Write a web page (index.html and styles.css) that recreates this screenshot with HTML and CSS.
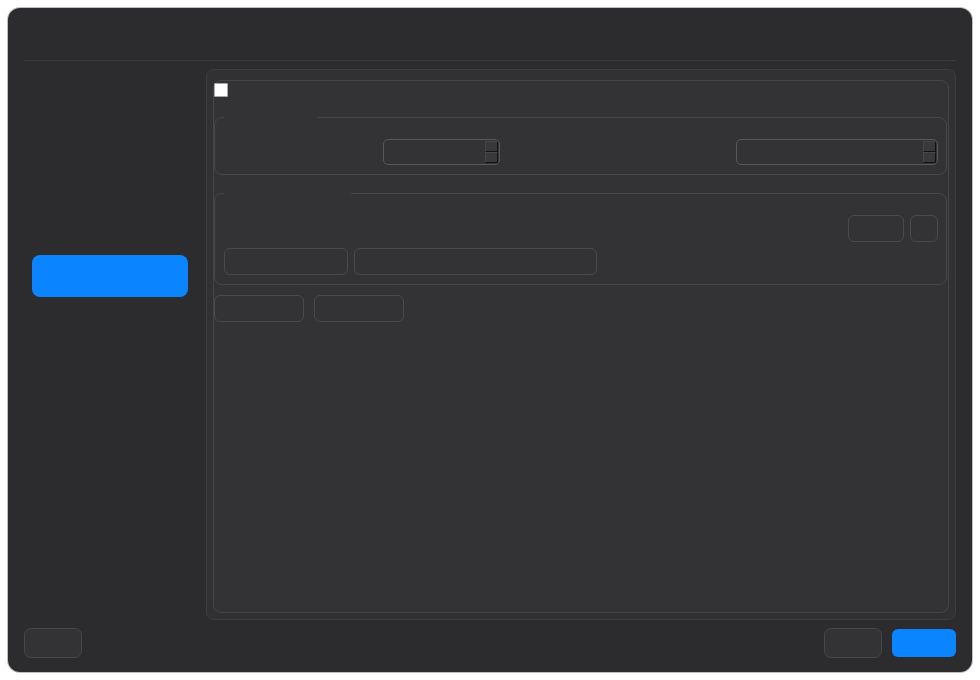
FILE: index.html
```html
<!DOCTYPE html>
<html lang="en">
<head>
  <meta charset="UTF-8" />
  <meta name="viewport" content="width=device-width, initial-scale=1" />
  <title>Settings</title>
  <link rel="stylesheet" href="styles.css">
</head>
<body>
  <div class="dialog">
    <div class="header"></div>

    <div class="content">
      <div class="sidebar">
        <button class="nav-item active" type="button"></button>
      </div>

      <div class="panel">
        <div class="page">
          <label class="check-row">
            <input type="checkbox" class="check" />
          </label>

          <fieldset class="group">
            <legend class="legend-short"></legend>
            <div class="form-row">
              <span class="field-label first"></span>
              <div class="spinbox narrow">
                <span class="spin"><i></i><i></i></span>
              </div>
              <span class="field-label second"></span>
              <div class="spinbox wide">
                <span class="spin"><i></i><i></i></span>
              </div>
            </div>
          </fieldset>

          <fieldset class="group">
            <legend class="legend-long"></legend>
            <div class="tools">
              <button class="btn btn-md" type="button"></button>
              <button class="btn btn-sm" type="button"></button>
            </div>
            <div class="fields">
              <div class="text-field short"></div>
              <div class="text-field long"></div>
            </div>
          </fieldset>

          <div class="actions">
            <button class="btn btn-lg" type="button"></button>
            <button class="btn btn-lg" type="button"></button>
          </div>
        </div>
      </div>
    </div>

    <div class="footer">
      <button class="btn footer-btn" type="button"></button>
      <div class="footer-right">
        <button class="btn footer-btn" type="button"></button>
        <button class="btn primary" type="button"></button>
      </div>
    </div>
  </div>
</body>
</html>
```

FILE: styles.css
```css
body {
  margin: 0;
  background: #ffffff;
  font-family: "Inter", "Liberation Sans", sans-serif;
  font-size: 13px;
  color: #e5e5e7;
}
.dialog {
  margin: 8px;
  width: 964px;
  height: 664px;
  box-sizing: border-box;
  padding: 0 16px 14px;
  background: #2c2c2e;
  border-radius: 12px;
  box-shadow: 0 0 0 1px rgba(0,0,0,0.25);
  display: flex;
  flex-direction: column;
}
.header {
  height: 52px;
  flex: none;
  border-bottom: 1px solid #3a3a3c;
}
.content {
  display: flex;
  margin-top: 8px;
  height: 551px;
  flex: none;
}

/* Left navigation */
.sidebar {
  width: 174px;
  flex: none;
  margin-right: 8px;
  padding: 186px 8px 0;
  box-sizing: border-box;
}
.nav-item {
  display: block;
  width: 156px;
  height: 42px;
  border: none;
  border-radius: 8px;
  background: transparent;
}
.nav-item.active {
  background: #0a84ff;
}

/* Right page area */
.panel {
  flex: 1;
  border: 1px solid #3e3e40;
  border-radius: 8px;
  background: #313133;
  padding: 10px 6px 6px;
  display: flex;
}
.page {
  flex: 1;
  border: 1px solid #454547;
  border-radius: 8px;
  background: #333335;
  padding: 2px 1px 0 0;
}
.check-row {
  display: block;
  height: 14px;
  margin-bottom: 20px;
}
.check {
  appearance: none;
  -webkit-appearance: none;
  display: block;
  margin: 0;
  width: 14px;
  height: 14px;
  box-sizing: border-box;
  background: #ffffff;
  border: 1px solid #a8a8a8;
  border-radius: 1px;
}

/* Group boxes */
.group {
  margin: 0 0 18px;
  border: 1px solid #47474a;
  border-radius: 8px;
  padding: 0 8px 9px 9px;
  min-width: 0;
}
.group + .group {
  margin-bottom: 10px;
}
.group legend {
  padding: 0;
  height: 0;
  line-height: 0;
}
.legend-short {
  width: 93px;
}
.legend-long {
  width: 127px;
}
.form-row {
  display: flex;
  align-items: center;
  margin-top: 21px;
}
.field-label.first {
  width: 159px;
  flex: none;
}
.field-label.second {
  flex: 1;
}
.spinbox {
  height: 26px;
  box-sizing: border-box;
  border: 1px solid #58585a;
  border-radius: 5px;
  background: #333335;
  display: flex;
  justify-content: flex-end;
  align-items: center;
  padding-right: 1px;
}
.spinbox.narrow {
  width: 117px;
}
.spinbox.wide {
  width: 202px;
}
.spin {
  display: flex;
  flex-direction: column;
  width: 13px;
}
.spin i {
  display: block;
  height: 11px;
  box-sizing: border-box;
  background: #39393b;
  border-top: 1px solid #47474a;
  border-left: 1px solid #47474a;
  border-bottom: 1px solid #131314;
  border-right: 1px solid #131314;
}

/* Buttons */
.btn {
  height: 27px;
  box-sizing: border-box;
  border: 1px solid #4a4a4c;
  border-radius: 6px;
  background: transparent;
  padding: 0;
  font: inherit;
  color: inherit;
}
.tools {
  display: flex;
  justify-content: flex-end;
  gap: 6px;
  margin-top: 21px;
}
.btn-md {
  width: 56px;
}
.btn-sm {
  width: 28px;
}
.fields {
  display: flex;
  gap: 6px;
  margin-top: 6px;
}
.text-field {
  height: 27px;
  box-sizing: border-box;
  border: 1px solid #4a4a4c;
  border-radius: 6px;
}
.text-field.short {
  width: 124px;
}
.text-field.long {
  width: 243px;
}
.actions {
  display: flex;
  gap: 10px;
}
.btn-lg {
  width: 90px;
}

/* Bottom bar */
.footer {
  display: flex;
  justify-content: space-between;
  align-items: center;
  margin-top: 8px;
  height: 30px;
  flex: none;
}
.footer-right {
  display: flex;
  gap: 10px;
  align-items: center;
}
.footer-btn {
  width: 58px;
  height: 30px;
  background: #333335;
  border-color: #474749;
  border-radius: 7px;
}
.primary {
  width: 64px;
  height: 28px;
  border: none;
  border-radius: 6px;
  background: #0a84ff;
}
```
